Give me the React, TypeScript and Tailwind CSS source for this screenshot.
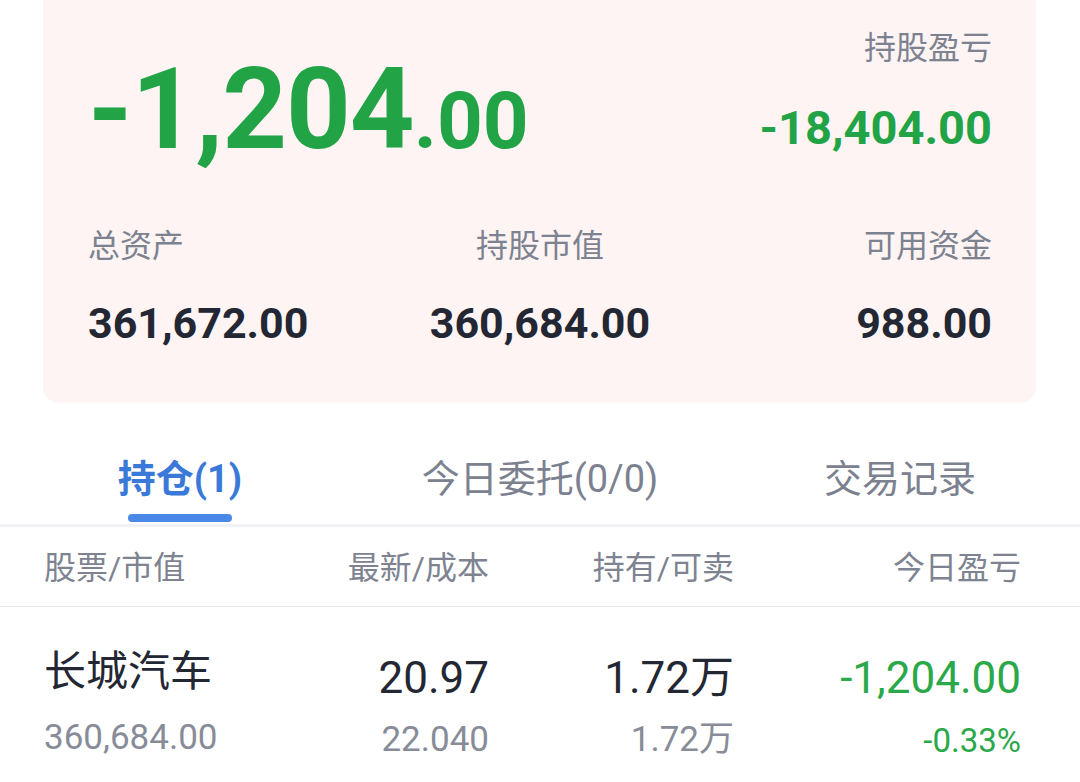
import React from 'react';

const FONT = { fontFamily: 'Roboto, "Noto Sans CJK SC", sans-serif' };

interface SummaryItem {
  label: string;
  value: string;
  align: string;
}

const summary: SummaryItem[] = [
  { label: '总资产', value: '361,672.00', align: 'items-start' },
  { label: '持股市值', value: '360,684.00', align: 'items-center' },
  { label: '可用资金', value: '988.00', align: 'items-end' },
];

const tabs = ['持仓(1)', '今日委托(0/0)', '交易记录'];

export default function App() {
  const activeTab = 0;

  return (
    <div className="w-[1080px] h-[782px] bg-white overflow-hidden" style={FONT}>
      {/* Account card */}
      <div className="ml-[43px] mr-[44px] bg-[#fdf4f3] rounded-b-2xl pl-[45px] pr-[44px] pt-[32px] pb-[58px]">
        <div className="h-[198px] flex justify-between items-start">
          <div className="mt-[21px] flex items-baseline font-bold text-[#21a346]">
            <span className="text-[113px] leading-[113px] tracking-[-1px]">-1,204</span>
            <span className="text-[80px] leading-[80px]">.00</span>
          </div>
          <div className="flex flex-col items-end">
            <span className="text-[32px] leading-[32px] text-[#7d8290]">持股盈亏</span>
            <span className="mt-[40px] text-[47px] leading-[48px] font-bold text-[#21a346]">-18,404.00</span>
          </div>
        </div>
        <div className="grid grid-cols-3">
          {summary.map((s) => (
            <div key={s.label} className={`flex flex-col ${s.align}`}>
              <span className="text-[32px] leading-[32px] text-[#7d8290]">{s.label}</span>
              <span className="mt-[39px] text-[43px] leading-[44px] font-bold text-[#232733]">{s.value}</span>
            </div>
          ))}
        </div>
      </div>

      {/* Tabs */}
      <div className="mt-[57px] grid grid-cols-3">
        {tabs.map((t, i) => (
          <div key={t} className="flex flex-col items-center">
            <span
              className={`text-[38px] leading-[38px] ${
                i === activeTab ? 'text-[#3b79d8] font-bold' : 'text-[#7c8190]'
              }`}
            >
              {t}
            </span>
            <div className={`mt-[16px] h-[8px] w-[104px] rounded-full ${i === activeTab ? 'bg-[#4a88e8]' : 'bg-transparent'}`} />
          </div>
        ))}
      </div>
      <div className="mt-[2px] h-[3px] bg-[#f2f2f6]" />

      {/* Column header */}
      <div className="grid grid-cols-[200px_245px_245px_1fr] pl-[44px] pr-[59px] pt-[25px] pb-[22px] border-b border-[#e9e9ec] text-[32px] leading-[32px] text-[#7e8391]">
        <span>股票/市值</span>
        <span className="text-right">最新/成本</span>
        <span className="text-right">持有/可卖</span>
        <span className="text-right">今日盈亏</span>
      </div>

      {/* Position row */}
      <div className="grid grid-cols-[200px_245px_245px_1fr] items-start pl-[44px] pr-[59px] pt-[44px]">
        <div className="flex flex-col items-start">
          <span className="text-[42px] leading-[42px] text-[#232733]">长城汽车</span>
          <span className="mt-[27px] text-[35px] leading-[35px] text-[#878c98]">360,684.00</span>
        </div>
        <div className="flex flex-col items-end mt-[5px]">
          <span className="text-[44px] leading-[44px] text-[#232733]">20.97</span>
          <span className="mt-[22px] text-[35px] leading-[35px] text-[#878c98]">22.040</span>
        </div>
        <div className="flex flex-col items-end mt-[5px]">
          <span className="text-[44px] leading-[44px] text-[#232733]">1.72万</span>
          <span className="mt-[22px] text-[35px] leading-[35px] text-[#878c98]">1.72万</span>
        </div>
        <div className="flex flex-col items-end mt-[5px]">
          <span className="text-[44px] leading-[44px] text-[#2aa84a]">-1,204.00</span>
          <span className="mt-[24px] text-[33px] leading-[33px] text-[#2aa84a]">-0.33%</span>
        </div>
      </div>
    </div>
  );
}
